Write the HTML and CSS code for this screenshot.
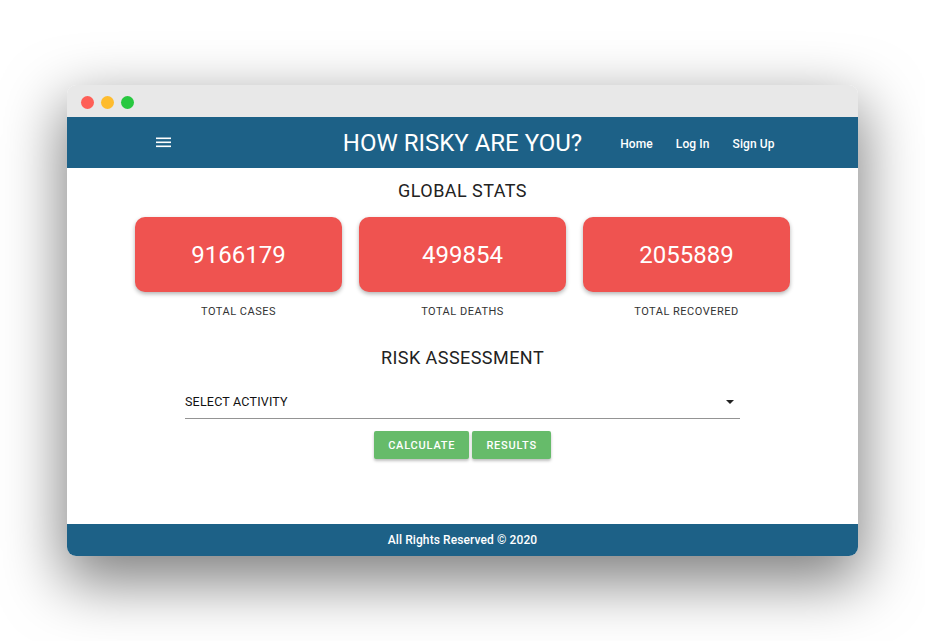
FILE: index.html
```html
<!DOCTYPE html>
<html>
<head>
<meta charset="utf-8">
<link rel="stylesheet" href="styles.css">
</head>
<body>
<div class="window">
  <div class="titlebar">
    <span class="dot red"></span><span class="dot yellow"></span><span class="dot green"></span>
  </div>
  <header class="appbar">
    <div class="left">
      <svg class="menu" width="15" height="11" viewBox="0 0 15 11"><rect x="0" y="0.5" width="15" height="1.6" fill="#fff"/><rect x="0" y="4.5" width="15" height="1.6" fill="#fff"/><rect x="0" y="8.5" width="15" height="1.6" fill="#fff"/></svg>
    </div>
    <h1 class="title">HOW RISKY ARE YOU?</h1>
    <nav class="nav">
      <a>Home</a><a>Log In</a><a>Sign Up</a>
    </nav>
  </header>
  <main class="content">
    <h2 class="heading">GLOBAL STATS</h2>
    <div class="stats">
      <div class="stat"><div class="card">9166179</div><div class="label">TOTAL CASES</div></div>
      <div class="stat"><div class="card">499854</div><div class="label">TOTAL DEATHS</div></div>
      <div class="stat"><div class="card">2055889</div><div class="label">TOTAL RECOVERED</div></div>
    </div>
    <h2 class="heading risk">RISK ASSESSMENT</h2>
    <div class="select">
      <span>SELECT ACTIVITY</span>
      <span class="arrow"></span>
    </div>
    <div class="buttons">
      <button class="btn">CALCULATE</button>
      <button class="btn">RESULTS</button>
    </div>
  </main>
  <footer class="footer">All Rights Reserved © 2020</footer>
</div>
</body>
</html>
```
FILE: styles.css
```css
html, body {
  margin: 0;
  padding: 0;
  background: #ffffff;
}
body {
  padding: 85px 0 0 67px;
  height: 641px;
  box-sizing: border-box;
  overflow: hidden;
  font-family: Roboto, "Liberation Sans", sans-serif;
}
.window {
  width: 791px;
  height: 471px;
  border-radius: 9px;
  overflow: hidden;
  background: #fff;
  display: flex;
  flex-direction: column;
  box-shadow: 0 22px 60px 4px rgba(0,0,0,0.5);
}
.titlebar {
  height: 32px;
  background: #e8e8e8;
  display: flex;
  align-items: center;
  padding: 2px 0 0 14px;
  box-sizing: border-box;
  gap: 7px;
  flex: none;
}
.dot {
  width: 13px;
  height: 13px;
  border-radius: 50%;
  display: block;
}
.red { background: #fe5f57; }
.yellow { background: #febc2e; }
.green { background: #28c840; }
.appbar {
  height: 51px;
  background: #1d6187;
  display: grid;
  grid-template-columns: 1fr auto 1fr;
  align-items: center;
  flex: none;
  color: #fff;
}
.left {
  padding-left: 89px;
  display: flex;
  align-items: center;
}
.menu { display: block; }
.title {
  margin: 0;
  font-size: 24px;
  font-weight: 400;
  letter-spacing: 0;
  line-height: 28px;
}
.nav {
  display: flex;
  gap: 23px;
  padding-left: 38px;
  padding-top: 2px;
}
.nav a {
  font-size: 12px;
  font-weight: 500;
  color: #fff;
  letter-spacing: 0.1px;
}
.content {
  flex: 1;
  display: flex;
  flex-direction: column;
  align-items: center;
}
.heading {
  margin: 12px 0 0;
  font-size: 18px;
  font-weight: 400;
  line-height: 22px;
  letter-spacing: 0.45px;
  color: #222;
}
.stats {
  display: flex;
  gap: 17px;
  margin-top: 15px;
}
.stat {
  display: flex;
  flex-direction: column;
  align-items: center;
}
.card {
  width: 207px;
  height: 75px;
  background: #ef5350;
  border-radius: 10px;
  box-shadow: 0 2px 4px rgba(0,0,0,0.3);
  color: #fff;
  font-size: 24px;
  display: flex;
  align-items: center;
  justify-content: center;
}
.label {
  margin-top: 13px;
  font-size: 11px;
  line-height: 14px;
  letter-spacing: 0.5px;
  color: #333;
}
.heading.risk {
  margin-top: 28px;
}
.select {
  width: 555px;
  margin-top: 18px;
  height: 32px;
  border-bottom: 1px solid #949494;
  display: flex;
  align-items: center;
  justify-content: space-between;
  font-size: 12.5px;
  color: #111;
  letter-spacing: 0.2px;
  box-sizing: border-box;
  padding-bottom: 2px;
}
.arrow {
  width: 0;
  height: 0;
  border-left: 4px solid transparent;
  border-right: 4px solid transparent;
  border-top: 4px solid #222;
  margin-right: 6px;
}
.buttons {
  display: flex;
  gap: 3px;
  margin-top: 12px;
}
.btn {
  height: 28px;
  border: none;
  border-radius: 2px;
  background: #66bb6a;
  color: #fff;
  font-family: Roboto, "Liberation Sans", sans-serif;
  font-size: 11px;
  font-weight: 500;
  letter-spacing: 0.8px;
  padding: 0 14px;
  box-shadow: 0 2px 3px rgba(0,0,0,0.25);
}
.footer {
  height: 32px;
  flex: none;
  background: #1d6187;
  color: #fff;
  font-size: 12px;
  font-weight: 500;
  letter-spacing: 0.1px;
  display: flex;
  align-items: center;
  justify-content: center;
}
```
